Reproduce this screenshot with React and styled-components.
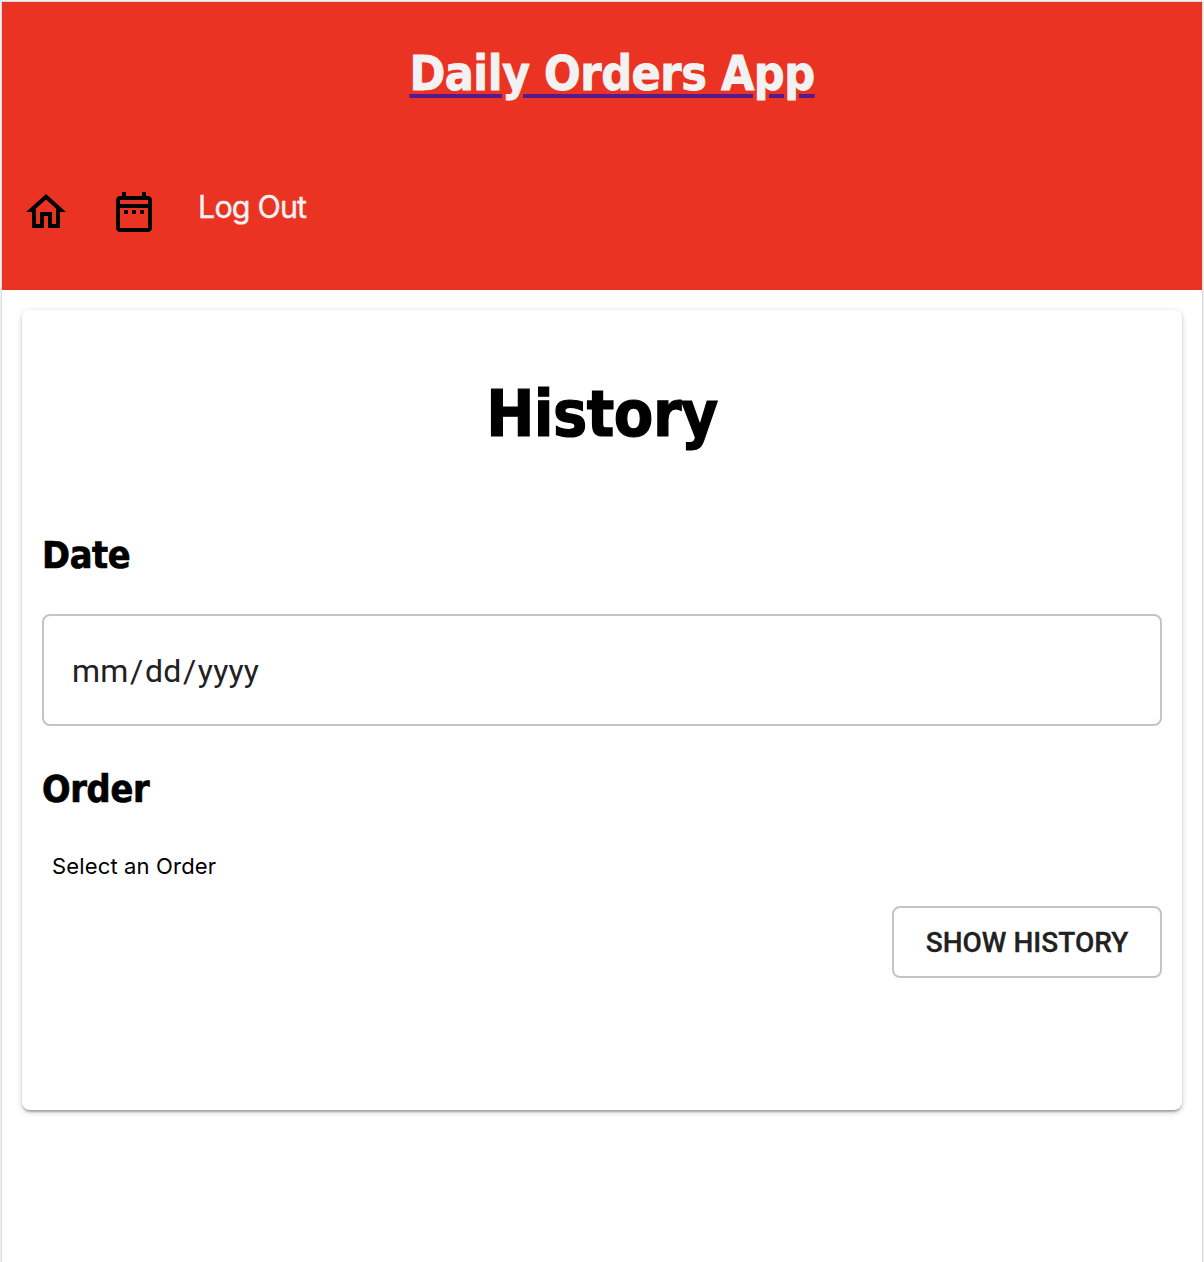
import React from "react";
import styled, { createGlobalStyle } from "styled-components";

const Global = createGlobalStyle`
  * { box-sizing: border-box; }
  body { margin: 0; background: #fff; overflow: hidden; }
`;

const heading = `"DejaVu Sans Condensed", "DejaVu Sans", sans-serif`;

const Page = styled.div`
  height: 1262px;
  border: 1px solid #f0f0f0;
  border-bottom: 0;
`;

const Frame = styled.div`
  height: 100%;
  border: 1px solid #d9d9d9;
  border-bottom: 0;
`;

const Header = styled.header`
  height: 288px;
  background: #eb3323;
  display: flex;
  flex-direction: column;
`;

const Brand = styled.a`
  align-self: center;
  margin: 42px 0 0 20px;
  font: bold 48px/58px ${heading};
  font-stretch: condensed;
  letter-spacing: -0.5px;
  -webkit-text-stroke: 0.8px #f2f2f2;
  text-decoration: underline #551a8b 4px;
  text-underline-offset: 4px;
  color: #f2f2f2;
  white-space: nowrap;
`;

const Nav = styled.nav`
  display: flex;
  align-items: flex-start;
  padding: 86px 0 0 20px;
`;

const NavIcon = styled.svg`
  width: 48px;
  height: 48px;
  margin-right: 40px;
  fill: #000;
`;

const LogOut = styled.a`
  margin-top: -1px;
  font: 30.5px/40px Inter, sans-serif;
  letter-spacing: -0.85px;
  -webkit-text-stroke: 0.4px #f2f2f2;
  color: #f2f2f2;
`;

const Card = styled.main`
  display: flex;
  flex-direction: column;
  height: 800px;
  margin: 20px;
  padding: 0 20px;
  border-radius: 8px;
  background: #fff;
  box-shadow: 0 2px 6px rgba(0, 0, 0, 0.2), 0 2px 2px rgba(0, 0, 0, 0.14), 0 4px 2px -2px rgba(0, 0, 0, 0.12);
`;

const Title = styled.h1`
  margin: 65px 0 0;
  font: bold 64px/78px ${heading};
  font-stretch: condensed;
  letter-spacing: -0.5px;
  -webkit-text-stroke: 1.2px #000;
  text-align: center;
`;

const Label = styled.h3`
  margin: ${(p) => p.$top}px 0 0;
  font: bold 37.44px/46px ${heading};
  font-stretch: condensed;
  letter-spacing: -0.3px;
  -webkit-text-stroke: 0.7px #000;
`;

const DateField = styled.div`
  height: 112px;
  margin-top: 36px;
  padding: 2px 28px 0;
  display: flex;
  align-items: center;
  border: 2px solid #c4c4c4;
  border-radius: 8px;
  font: 32px/38px Roboto, sans-serif;
  letter-spacing: 0.2px;
  color: #212121;
`;

const Slash = styled.span`
  margin: 0 1.5px;
`;

const Select = styled.div`
  margin: 40px 0 0 10px;
  font: 22px/28px Inter, sans-serif;
  letter-spacing: 0.15px;
  color: #000;
`;

const ShowButton = styled.button`
  align-self: flex-end;
  width: 270px;
  height: 72px;
  margin-top: 26px;
  padding: 2px 0 0;
  border: 2px solid #c4c4c4;
  border-radius: 8px;
  background: transparent;
  font: 500 28px/36px Roboto, sans-serif;
  -webkit-text-stroke: 0.3px #212121;
  color: #212121;
`;

export default function App() {
  return (
    <>
      <Global />
      <Page>
        <Frame>
          <Header>
            <Brand>Daily Orders App</Brand>
            <Nav>
              <NavIcon viewBox="0 0 24 24">
                <path d="M12 5.69l5 4.5V18h-2v-6H9v6H7v-7.81l5-4.5M12 3L2 12h3v8h6v-6h2v6h6v-8h3L12 3z" />
              </NavIcon>
              <NavIcon viewBox="0 0 24 24">
                <path d="M19 4h-1V2h-2v2H8V2H6v2H5c-1.1 0-2 .9-2 2v14c0 1.1.9 2 2 2h14c1.1 0 2-.9 2-2V6c0-1.1-.9-2-2-2zm0 16H5V10h14v10zm0-12H5V6h14v2zM7 11h2v2H7zm4 0h2v2h-2zm4 0h2v2h-2z" />
              </NavIcon>
              <LogOut>Log Out</LogOut>
            </Nav>
          </Header>
          <Card>
            <Title>History</Title>
            <Label $top={79}>Date</Label>
            <DateField>
              mm<Slash>/</Slash>dd<Slash>/</Slash>yyyy
            </DateField>
            <Label $top={40}>Order</Label>
            <Select>Select an Order</Select>
            <ShowButton>SHOW HISTORY</ShowButton>
          </Card>
        </Frame>
      </Page>
    </>
  );
}
